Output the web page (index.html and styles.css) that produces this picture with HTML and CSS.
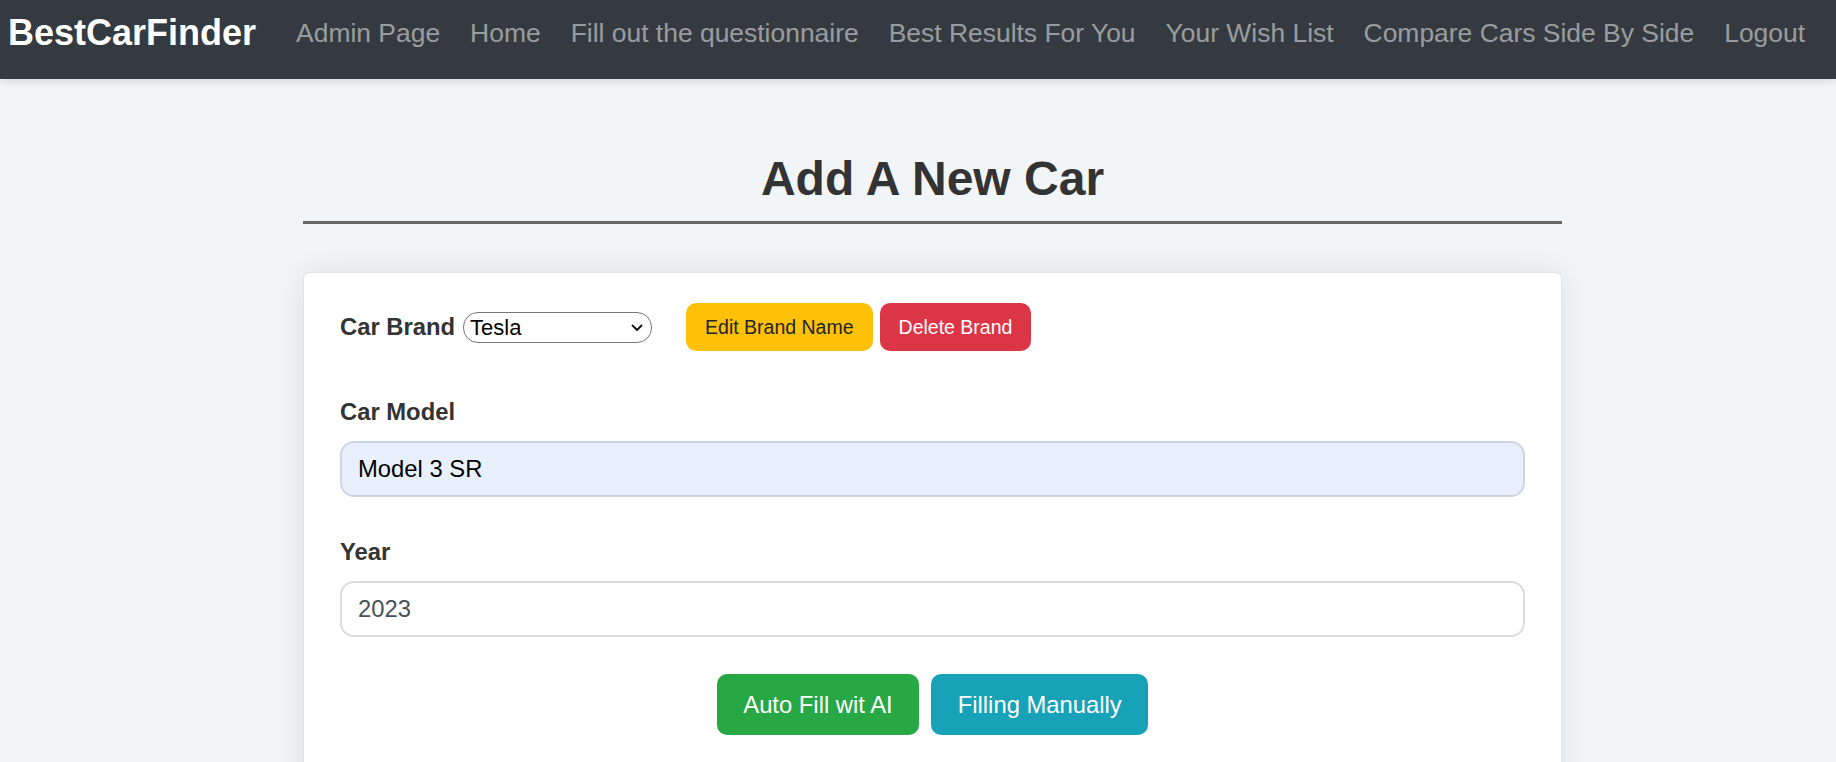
FILE: index.html
```html
<!DOCTYPE html>
<html lang="en">
<head>
<meta charset="utf-8">
<title>BestCarFinder - Add A New Car</title>
<link rel="stylesheet" href="styles.css">
</head>
<body>
<nav class="navbar">
  <a class="brand" href="#">BestCarFinder</a>
  <ul class="nav-links">
    <li><a href="#">Admin Page</a></li>
    <li><a href="#">Home</a></li>
    <li><a href="#">Fill out the questionnaire</a></li>
    <li><a href="#">Best Results For You</a></li>
    <li><a href="#">Your Wish List</a></li>
    <li><a href="#">Compare Cars Side By Side</a></li>
    <li><a href="#">Logout</a></li>
  </ul>
</nav>
<main class="container">
  <h1 class="page-title">Add A New Car</h1>
  <form class="card">
    <div class="brand-row">
      <label class="inline-label" for="brand">Car Brand</label>
      <div class="select-wrap">
        <select id="brand" class="brand-select">
          <option>Tesla</option>
        </select>
        <svg class="chevron" width="12" height="8" viewBox="0 0 12 8"><path d="M1.5 1.5 L6 6 L10.5 1.5" fill="none" stroke="#111" stroke-width="1.8" stroke-linecap="round" stroke-linejoin="round"/></svg>
      </div>
      <button type="button" class="btn btn-sm btn-warning">Edit Brand Name</button>
      <button type="button" class="btn btn-sm btn-danger">Delete Brand</button>
    </div>
    <div class="form-group">
      <label class="field-label" for="model">Car Model</label>
      <input id="model" class="field field-autofill" type="text" value="Model 3 SR">
    </div>
    <div class="form-group form-group-last">
      <label class="field-label" for="year">Year</label>
      <input id="year" class="field" type="text" value="2023">
    </div>
    <div class="actions">
      <button type="button" class="btn btn-lg btn-success">Auto Fill wit AI</button>
      <button type="button" class="btn btn-lg btn-info">Filling Manually</button>
    </div>
  </form>
</main>
</body>
</html>
```
FILE: styles.css
```css
* { box-sizing: border-box; }

html, body { margin: 0; }

body {
  font-family: "Liberation Sans", Arial, Helvetica, sans-serif;
  background: #f1f5f7;
  color: #333;
  overflow: hidden;
}

.navbar {
  display: flex;
  align-items: center;
  height: 79px;
  padding: 12px 0 26px 8px;
  background: #343a40;
  box-shadow: 0 2px 8px rgba(0, 0, 0, 0.12);
  position: relative;
  z-index: 1;
  white-space: nowrap;
}

.brand {
  flex-shrink: 0;
  font-size: 36px;
  font-weight: 700;
  color: #fff;
  text-decoration: none;
  margin-right: 25px;
  line-height: 41px;
}

.nav-links {
  display: flex;
  flex-shrink: 0;
  list-style: none;
  margin: 0;
  padding: 0;
}

.nav-links li {
  flex-shrink: 0;
}

.nav-links a {
  display: block;
  padding: 0 15px;
  font-size: 26.45px;
  line-height: 30px;
  color: rgba(255, 255, 255, 0.5);
  text-decoration: none;
  white-space: nowrap;
}

.container {
  width: 1259px;
  margin-left: 303px;
}

.page-title {
  margin: 72px 0 0;
  padding-bottom: 15px;
  font-size: 48px;
  line-height: 55px;
  font-weight: 700;
  color: #333;
  text-align: center;
  border-bottom: 3px solid #666;
}

.card {
  margin-top: 48px;
  background: #fff;
  border: 1px solid #dfe3e6;
  border-radius: 6px;
  padding: 30px 36px 60px;
  box-shadow: 0 0 32px rgba(0, 0, 0, 0.09);
}

.brand-row {
  display: flex;
  align-items: center;
  height: 48px;
  margin-bottom: 47px;
}

.inline-label {
  font-size: 23.8px;
  font-weight: 700;
  color: #333;
}

.select-wrap {
  position: relative;
  margin-left: 8px;
  display: flex;
}

.brand-select {
  appearance: none;
  -webkit-appearance: none;
  width: 189px;
  height: 31px;
  padding: 0 26px 0 6px;
  font-family: "Liberation Sans", Arial, sans-serif;
  font-size: 22px;
  color: #000;
  background: #fff;
  border: 1px solid #767676;
  border-radius: 15px;
}

.chevron {
  position: absolute;
  right: 9px;
  top: 12px;
  pointer-events: none;
}

.btn {
  border: none;
  font-family: "Liberation Sans", Arial, sans-serif;
  cursor: pointer;
}

.btn-sm {
  height: 48px;
  padding: 0 19px;
  font-size: 19.5px;
  border-radius: 10px;
}

.btn-warning {
  margin-left: 34px;
  background: #ffc107;
  color: #212529;
}

.btn-danger {
  margin-left: 7px;
  background: #dc3545;
  color: #fff;
}

.form-group {
  margin-bottom: 41px;
}

.form-group-last {
  margin-bottom: 37px;
}

.field-label {
  display: block;
  font-size: 23.8px;
  line-height: 27px;
  font-weight: 700;
  color: #333;
  margin-bottom: 16px;
}

.field {
  display: block;
  width: 100%;
  height: 56px;
  padding: 0 16px;
  font-family: "Liberation Sans", Arial, sans-serif;
  font-size: 23.8px;
  color: #495057;
  background: #fff;
  border: 2px solid #dcdcdc;
  border-radius: 14px;
  outline: none;
}

.field-autofill {
  background: #e8f0fe;
  border-color: #cfd6e0;
  color: #000;
}

.actions {
  display: flex;
  justify-content: center;
  gap: 12px;
}

.btn-lg {
  height: 61px;
  padding: 0 26.5px;
  font-size: 23.8px;
  border-radius: 10px;
  color: #fff;
}

.btn-success { background: #28a745; }
.btn-info { background: #17a2b8; }
```
